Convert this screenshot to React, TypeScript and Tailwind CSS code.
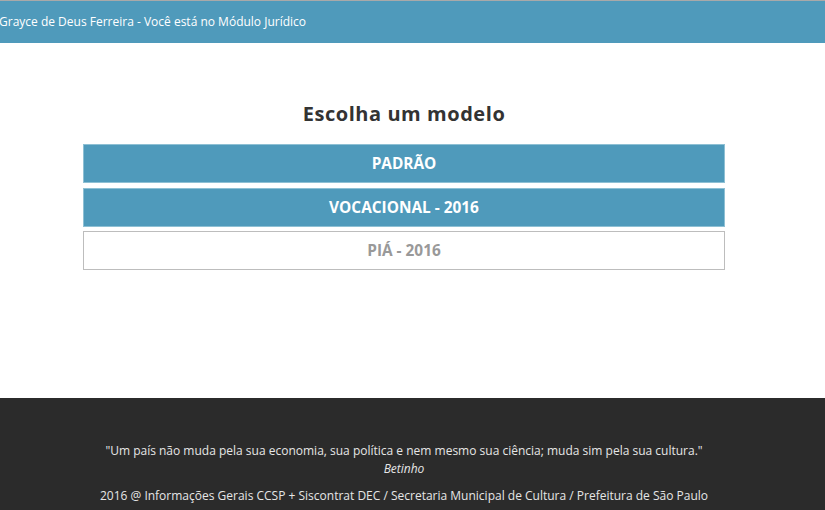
export default function App() {
  return (
    <div className="w-[825px] h-[510px] overflow-hidden bg-white" style={{ fontFamily: '"Open Sans", sans-serif' }}>
      <div className="h-[43px] border-t border-[#a9a9a9] bg-[#4f9abb] flex items-center">
        <span className="text-white text-[12px] -ml-[1px] leading-none">Grayce de Deus Ferreira - Você está no Módulo Jurídico</span>
      </div>
      <div className="h-[355px] w-[808px] flex flex-col items-center pt-[61px]">
        <h2 className="text-[20px] font-bold text-[#333] leading-none tracking-[0.55px]">Escolha um modelo</h2>
        <div className="mt-[20px] w-[642px] flex flex-col gap-[5px]">
          <div className="h-[39px] bg-[#4f9abb] border border-[#8ec0d4] flex items-center justify-center text-white font-bold text-[15.4px]">PADRÃO</div>
          <div className="h-[39px] bg-[#4f9abb] border border-[#8ec0d4] flex items-center justify-center text-white font-bold text-[15.4px]">VOCACIONAL - 2016</div>
          <div className="h-[39px] bg-white border border-[#bdbdbd] flex items-center justify-center text-[#999] font-bold text-[15.4px] -mt-[1px]">PIÁ - 2016</div>
        </div>
      </div>
      <div className="h-[112px] bg-[#2b2b2b] w-full">
        <div className="w-[808px] flex flex-col items-center pt-[44px] text-[#e6e6e6] text-[12px]">
          <p className="leading-[18px]">"Um país não muda pela sua economia, sua política e nem mesmo sua ciência; muda sim pela sua cultura."</p>
          <p className="leading-[18px] italic">Betinho</p>
          <p className="leading-[18px] mt-[9px]">2016 @ Informações Gerais CCSP + Siscontrat DEC / Secretaria Municipal de Cultura / Prefeitura de São Paulo</p>
        </div>
      </div>
    </div>
  );
}
